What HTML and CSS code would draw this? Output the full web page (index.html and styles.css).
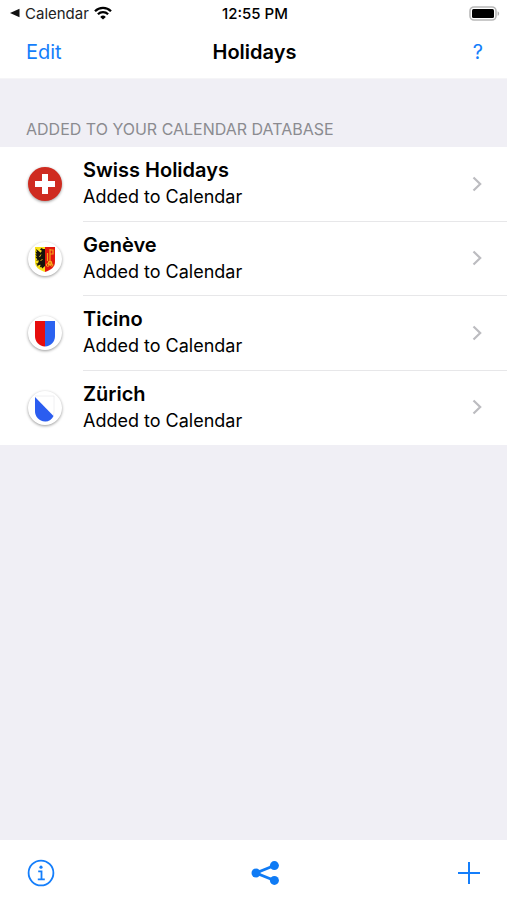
FILE: index.html
```html
<!DOCTYPE html>
<html lang="en">
<head>
<meta charset="utf-8">
<meta name="viewport" content="width=device-width, initial-scale=1">
<title>Holidays</title>
<link rel="stylesheet" href="styles.css">
</head>
<body>
<div class="app">
  <header class="top">
    <div class="status">
      <div class="status-left">
        <a class="back" href="#"><svg width="10" height="10" viewBox="0 0 10 10" aria-hidden="true"><path d="M0 5 9.500.800v8.400z" fill="#111"/></svg>Calendar</a>
        <svg class="wifi" width="18" height="14" viewBox="0 0 18 14" aria-hidden="true">
          <path d="M1 5.2a11.4 11.4 0 0 1 16 0M3.9 8.2a7.3 7.3 0 0 1 10.2 0" fill="none" stroke="#000" stroke-width="2.3"/>
          <path d="M9 13.6 6.2 10.9a4 4 0 0 1 5.6 0z"/>
        </svg>
      </div>
      <time class="clock">12:55 PM</time>
      <svg class="battery" width="31" height="15" viewBox="0 0 31 15" aria-hidden="true">
        <rect x="1" y="1" width="26" height="13" rx="4" fill="#fff" stroke="#b8b8b8" stroke-width="1.6"/>
        <rect x="3" y="3" width="22" height="9" rx="1.5"/>
        <path d="M28.6 5.2c2 .8 2 3.8 0 4.6z" fill="#b0b0b0"/>
      </svg>
    </div>
    <nav class="nav">
      <button class="nav-button" type="button">Edit</button>
      <h1 class="title">Holidays</h1>
      <button class="nav-button help" type="button">?</button>
    </nav>
  </header>
  <main class="content">
    <h2 class="section-title">ADDED TO YOUR CALENDAR DATABASE</h2>
    <ul class="list">
      <li class="row">
        <span class="badge swiss"><svg width="34" height="34" viewBox="0 0 34 34" aria-hidden="true"><path d="M14 7h6v7h7v6h-7v7h-6v-7H7v-6h7z" fill="#fff"/></svg></span>
        <a class="row-body" href="#"><span class="labels"><span class="name">Swiss Holidays</span><span class="detail">Added to Calendar</span></span><svg class="chevron" width="10" height="16" viewBox="0 0 10 16" aria-hidden="true"><path d="m1.5 1.5 6.7 6.5-6.7 6.5"/></svg></a>
      </li>
      <li class="row">
        <span class="badge"><svg width="34" height="34" viewBox="0 0 34 34" aria-hidden="true">
          <path d="M7 5h10v25C11 28 7 25 7 20z" fill="#f7e019"/>
          <path d="M17 5h10v15c0 5-4 8-10 10z" fill="#e3170d"/>
          <path d="M17 7h-2l-1.5-1-1.6 1.6 2 1.2-1.2 2L10 8.5 8 7l1 3-1.6-.6 1.4 3L7.4 12l1.500 3-1.500-.2 2 2.600-1.600 1 3.200.2-1 2.600-2.200.6 1.700 1-.5 1.800 2-1.600 1.600-.2-.8 2.600 1.500-.6.9 1.600L17 24z" fill="#16130b"/>
          <path d="M13 12.5 11.5 15M14.5 17l-2 2" stroke="#e0bd18"/>
          <path d="M22 7v15M22 8h3v4h-3M19.5 11v8" fill="none" stroke="#f3a51c" stroke-width="1.2"/>
          <circle cx="22" cy="21" r="1.7" fill="none" stroke="#f5b31d" stroke-width="1.2"/><circle cx="19.7" cy="23" r="1.4" fill="none" stroke="#f5b31d"/><circle cx="23.7" cy="23" r="1.2" fill="none" stroke="#f5b31d"/>
        </svg></span>
        <a class="row-body" href="#"><span class="labels"><span class="name">Genève</span><span class="detail">Added to Calendar</span></span><svg class="chevron" width="10" height="16" viewBox="0 0 10 16" aria-hidden="true"><path d="m1.5 1.5 6.7 6.5-6.7 6.5"/></svg></a>
      </li>
      <li class="row">
        <span class="badge"><svg width="34" height="34" viewBox="0 0 34 34" aria-hidden="true"><path d="M7 5h10v25.5C11 30 7 26 7 20z" fill="#e60d0d"/><path d="M17 5h10v15c0 6-4 10-10 10.5z" fill="#2b62f0"/></svg></span>
        <a class="row-body" href="#"><span class="labels"><span class="name">Ticino</span><span class="detail">Added to Calendar</span></span><svg class="chevron" width="10" height="16" viewBox="0 0 10 16" aria-hidden="true"><path d="m1.5 1.5 6.7 6.5-6.7 6.5"/></svg></a>
      </li>
      <li class="row">
        <span class="badge"><svg width="34" height="34" viewBox="0 0 34 34" aria-hidden="true"><path d="M7 5h19v15c0 6-3 10-9 10.5" fill="#fff" stroke="#ececef" stroke-width=".8"/><path d="M7 6 25.5 25c-1.500 3.500-4.500 5.500-8.500 5.500C11 30 7 26 7 20z" fill="#2b5df0"/></svg></span>
        <a class="row-body" href="#"><span class="labels"><span class="name">Zürich</span><span class="detail">Added to Calendar</span></span><svg class="chevron" width="10" height="16" viewBox="0 0 10 16" aria-hidden="true"><path d="m1.5 1.5 6.7 6.5-6.7 6.5"/></svg></a>
      </li>
    </ul>
  </main>
  <footer class="toolbar">
    <button class="tool" type="button" aria-label="Information"><svg width="28" height="28" viewBox="0 0 28 28" aria-hidden="true"><circle cx="14" cy="14" r="12.4" fill="none" stroke="#147efb" stroke-width="1.8"/><circle cx="14" cy="8.2" r="1.6" fill="#147efb"/><path d="M11.2 12.4h3.300v8M10.800 20.400h7" fill="none" stroke="#147efb" stroke-width="1.8"/></svg></button>
    <button class="tool share" type="button" aria-label="Share"><svg width="28" height="26" viewBox="0 0 28 26" aria-hidden="true"><path d="M23.5 5.500 5 13l18.500 7.500" fill="none" stroke="#0f7bf5" stroke-width="2.8"/><g fill="#0f7bf5"><circle cx="5" cy="13" r="4.5"/><circle cx="23.4" cy="5.6" r="4.5"/><circle cx="23.4" cy="20.4" r="4.5"/></g></svg></button>
    <button class="tool" type="button" aria-label="Add"><svg width="22" height="22" viewBox="0 0 22 22" aria-hidden="true"><path d="M11 0v22M0 11h22" stroke="#147efb" stroke-width="2"/></svg></button>
  </footer>
</div>
</body>
</html>
```
FILE: styles.css
```css
* {
  box-sizing: border-box;
}

body {
  margin: 0;
  background: #f0eff5;
  color: #000;
  font-family: Inter, "Liberation Sans", sans-serif;
}

.app {
  display: flex;
  flex-direction: column;
  min-height: 100vh;
}

a {
  color: inherit;
  text-decoration: none;
}

button {
  padding: 0;
  border: 0;
  background: none;
  color: #147efb;
  font: inherit;
}

.top {
  background: #fff;
  border-bottom: 1px solid #f5f5f7;
}

.status,
.nav {
  display: grid;
  grid-template-columns: 1fr auto 1fr;
  align-items: center;
}

.status {
  height: 26px;
  padding: 0 7px 0 10px;
  font-size: 15px;
}

.status-left,
.back {
  display: flex;
  align-items: center;
  gap: 5px;
}

.back {
  color: #222;
}

.clock {
  font-weight: 500;
}

.battery {
  justify-self: end;
}

.nav {
  height: 52px;
  padding: 0 24px 0 26px;
  font-size: 20px;
}

.nav-button {
  justify-self: start;
}

.help {
  justify-self: end;
}

.title {
  margin: 0;
  font-size: 20px;
  font-weight: 600;
}

.content {
  flex: 1;
}

.section-title {
  margin: 0;
  padding: 40px 26px 8px;
  color: #8b8b90;
  font-size: 16px;
  font-weight: 400;
  line-height: 20px;
}

.list {
  display: grid;
  grid-auto-rows: 1fr;
  min-height: 298px;
  margin: 0;
  padding: 0;
  background: #fff;
  list-style: none;
}

.row {
  display: flex;
  gap: 21px;
  padding-left: 28px;
}

.badge {
  align-self: center;
  width: 34px;
  height: 34px;
  border-radius: 50%;
  background: #fff;
  box-shadow: 0 1px 3px rgba(0, 0, 0, .4);
}

.badge svg {
  display: block;
}

.swiss {
  background: #cf2b20;
}

.row-body {
  display: flex;
  flex: 1;
  align-items: center;
  justify-content: space-between;
  padding-right: 25px;
  border-bottom: 1px solid #e7e7e9;
}

.row:last-child .row-body {
  border-bottom-color: transparent;
}

.labels {
  display: grid;
  gap: 1px;
}

.name {
  font-size: 20px;
  font-weight: 600;
  line-height: 26px;
}

.detail {
  font-size: 18px;
  line-height: 26px;
}

.chevron {
  fill: none;
  stroke: #bcbcc0;
  stroke-width: 2.2;
}

.toolbar {
  display: grid;
  grid-template-columns: 1fr auto 1fr;
  align-items: center;
  height: 60px;
  padding: 6px 27px 0;
  background: #fff;
}

.tool {
  display: flex;
  justify-self: start;
}

.share {
  justify-content: flex-end;
  width: 50px;
}

.tool:last-child {
  justify-self: end;
}
```
